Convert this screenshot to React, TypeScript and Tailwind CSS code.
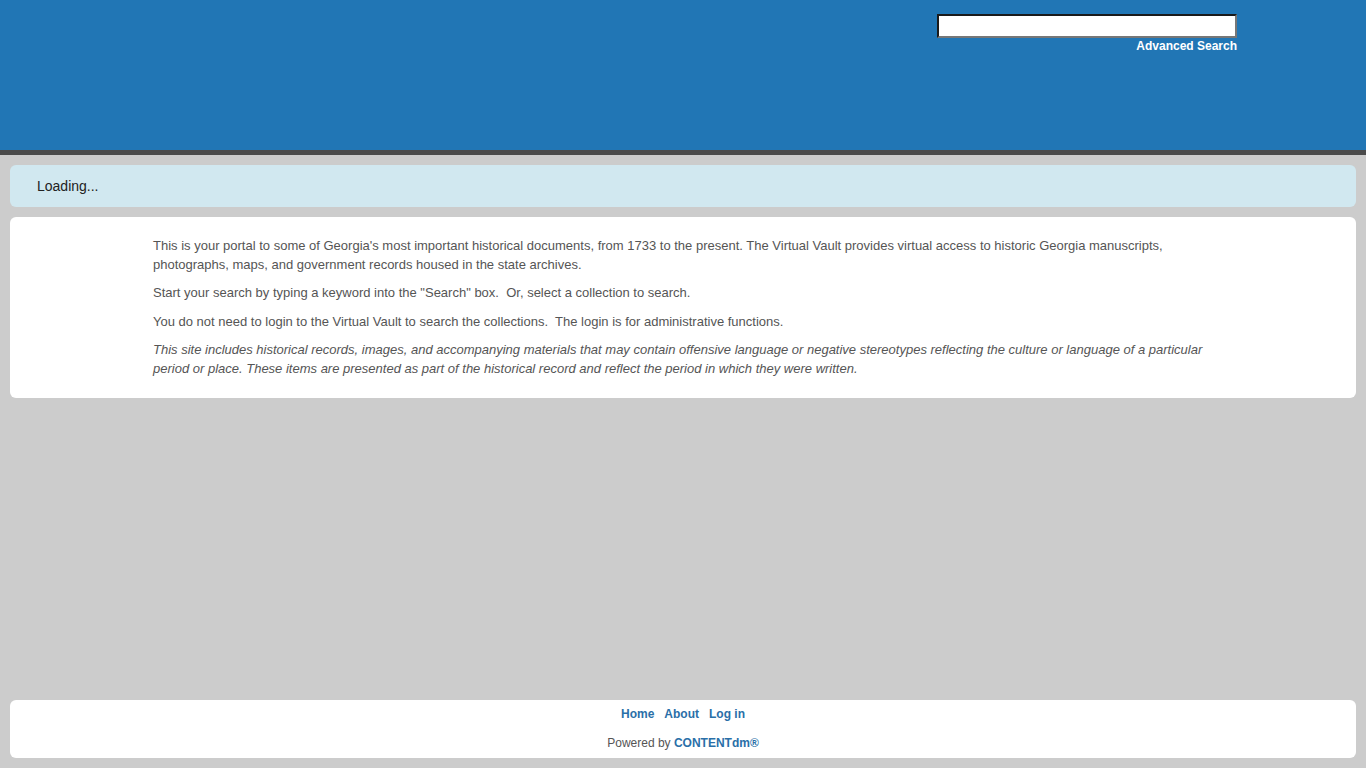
import React from 'react';

const links = ['Home', 'About', 'Log in'];

export default function App() {
    return (
        <div className="flex min-h-screen flex-col bg-[#cccccc] font-['Liberation_Sans',Arial,sans-serif]">
            <header className="h-[155px] border-b-[5px] border-[#4b4b4b] bg-[#2176b5]">
                <div className="ml-[937px] flex w-[300px] flex-col items-end pt-[14px]">
                    <input
                        type="text"
                        className="h-[24px] w-[300px] border-2 border-b-[#777] border-l-[#1a1a1a] border-r-[#777] border-t-[#1a1a1a] bg-white px-1 text-[13px] outline-none"
                    />
                    <a href="#" className="mt-[1px] text-[12px] leading-[14px] font-bold text-white">
                        Advanced Search
                    </a>
                </div>
            </header>

            <main className="flex flex-1 flex-col gap-[10px] px-[10px] pt-[10px]">
                <div className="flex h-[42px] items-center rounded-md bg-[#d1e8f0] pl-[27px] text-[14px] text-[#222]">
                    Loading...
                </div>
                <div className="rounded-md bg-white pb-[20px] pt-[19px]">
                    <div className="mx-auto w-[1060px] text-[13px] leading-[19px] text-[#555]">
                        <p>
                            This is your portal to some of Georgia's most important historical documents, from 1733 to the present. The Virtual Vault provides virtual access to historic Georgia manuscripts, photographs, maps, and government records housed in the state archives.
                        </p>
                        <p className="mt-[9px]">
                            Start your search by typing a keyword into the "Search" box.&nbsp; Or, select a collection to search.
                        </p>
                        <p className="mt-[10px]">
                            You do not need to login to the Virtual Vault to search the collections.&nbsp; The login is for administrative functions.
                        </p>
                        <p className="mt-[9px] italic">
                            This site includes historical records, images, and accompanying materials that may contain offensive language or negative stereotypes reflecting the culture or language of a particular period or place. These items are presented as part of the historical record and reflect the period in which they were written.
                        </p>
                    </div>
                </div>
            </main>

            <footer className="mx-[10px] mb-[10px] mt-[10px] flex h-[58px] flex-col items-center rounded-md bg-white pt-[5px] text-[12px]">
                <nav className="flex gap-[10px] font-bold text-[#2a6fa8]">
                    {links.map((l) => (
                        <a key={l} href="#">{l}</a>
                    ))}
                </nav>
                <div className="mt-[11px] text-[#555]">
                    Powered by <a href="#" className="font-bold text-[#2a6fa8]">CONTENTdm®</a>
                </div>
            </footer>
        </div>
    );
}
